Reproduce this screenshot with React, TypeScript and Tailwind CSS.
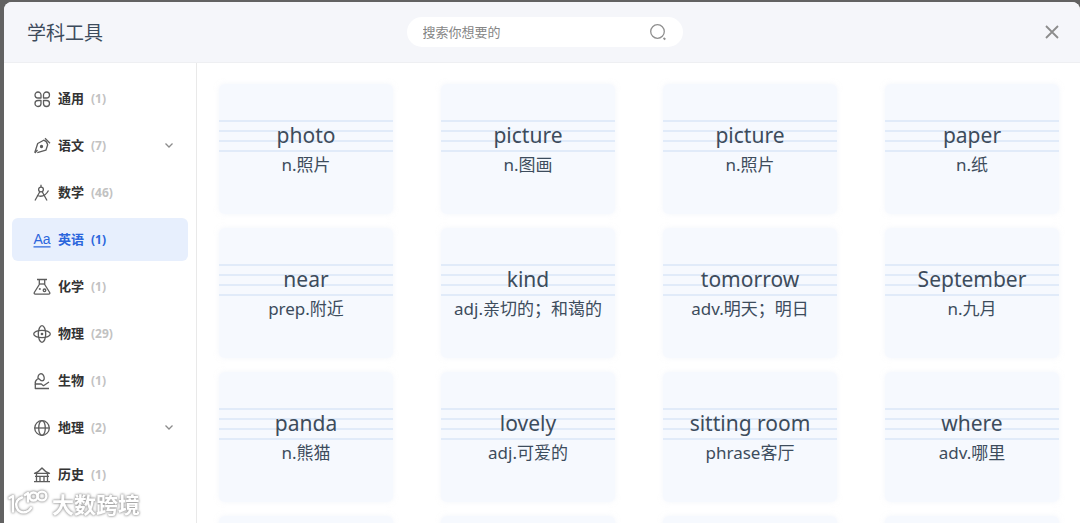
import type { ReactNode } from 'react';

type Subject = {
  name: string;
  count: number;
  icon: ReactNode;
  expandable?: boolean;
};

const subjects: Subject[] = [
  {
    name: '通用',
    count: 1,
    icon: (
      <>
        <path d="M8 5a3 3 0 1 0-3 3h3V5Z" />
        <path d="M10.500 5a3 3 0 1 1 3 3h-3V5Z" />
        <path d="M8 13.500a3 3 0 1 1-3-3h3v3Z" />
        <path d="M10.500 13.500a3 3 0 1 0 3-3h-3v3Z" />
      </>
    ),
  },
  {
    name: '语文',
    count: 7,
    expandable: true,
    icon: (
      <>
        <path d="M1.800 15.500 4.700 6.500l6-3.300c2 .6 3.500 2.400 4 4.600l-1.800 5.400-8.600 2.500" />
        <path d="m1.800 16 2.700-3" />
        <path d="m12 1.300 5 5" />
        <circle cx="8.500" cy="9.500" r="1" fill="currentColor" />
      </>
    ),
  },
  {
    name: '数学',
    count: 46,
    icon: (
      <>
        <path d="M8 .8V3" />
        <circle cx="8" cy="5.500" r="2.400" />
        <path d="M6.800 7.800 2 16.500M9.200 7.800l4.800 8.700" />
        <path d="M4 11.500c4 1.500 8.500.5 11.500-5" />
      </>
    ),
  },
  {
    name: '英语',
    count: 1,
    icon: (
      <>
        <text x="0.500" y="12.500" fontSize="14" fontWeight="400" fill="currentColor" stroke="none" className="font-['Liberation_Sans',sans-serif]">
          Aa
        </text>
        <path d="M.5 15.800h17" />
      </>
    ),
  },
  {
    name: '化学',
    count: 1,
    icon: (
      <>
        <path d="M4 1.500h10M6.300 1.500v5L1.300 14.500c-.4 1 0 1.600 1 1.600h13.400c1 0 1.400-.6 1-1.600l-5-8v-5" />
        <path d="M6.300 6h5.400" />
        <circle cx="11.500" cy="12.300" r="1.300" />
        <circle cx="6.800" cy="11" r=".4" />
      </>
    ),
  },
  {
    name: '物理',
    count: 29,
    icon: (
      <>
        <ellipse cx="9" cy="9" rx="8.300" ry="3.700" />
        <ellipse cx="9" cy="9" rx="3.700" ry="8.300" />
        <circle cx="9" cy="9" r=".7" fill="currentColor" />
      </>
    ),
  },
  {
    name: '生物',
    count: 1,
    icon: (
      <>
        <path d="M5 7.500c-.3-3 1-5.500 3-5.800 2 .2 3.500 2.500 3.200 5.300-.3 1.300-1.500 2-3 1.700L5 6" />
        <path d="M4.500 7C2.300 8.500 2 10.500 2.300 12h6l2.200 1.700L16 10" />
        <path d="M2.300 12v4.500H16" />
      </>
    ),
  },
  {
    name: '地理',
    count: 2,
    expandable: true,
    icon: (
      <>
        <circle cx="9" cy="9" r="7.300" />
        <ellipse cx="9" cy="9" rx="3.300" ry="7.300" />
        <path d="M1.700 9h14.600" />
      </>
    ),
  },
  {
    name: '历史',
    count: 1,
    icon: (
      <>
        <path d="M1.500 7.300C4 6.500 7 4.500 9 2c2 2.500 5 4.500 7.500 5.300h-15Z" />
        <path d="M3.500 7.500v8M14.500 7.500v8M1 15.700h16M2 10.300h14M7 15.500v-5M11 15.500v-5" />
      </>
    ),
  },
];

const words = [
  { en: 'photo', zh: 'n.照片' },
  { en: 'picture', zh: 'n.图画' },
  { en: 'picture', zh: 'n.照片' },
  { en: 'paper', zh: 'n.纸' },
  { en: 'near', zh: 'prep.附近' },
  { en: 'kind', zh: 'adj.亲切的；和蔼的' },
  { en: 'tomorrow', zh: 'adv.明天；明日' },
  { en: 'September', zh: 'n.九月' },
  { en: 'panda', zh: 'n.熊猫' },
  { en: 'lovely', zh: 'adj.可爱的' },
  { en: 'sitting room', zh: 'phrase客厅' },
  { en: 'where', zh: 'adv.哪里' },
];

function Header() {
  return (
    <header className="grid h-[61px] grid-cols-[1fr_278px_1fr] items-center border-b border-[#eeeff2] bg-[#f5f6fa] pr-5 pl-[23px]">
      <h1 className="pt-[3px] text-[19px] text-[#3d4b5c]">学科工具</h1>
      <label className="ml-[2px] flex h-[30px] items-center rounded-full bg-white px-4">
        <input
          type="text"
          aria-label="搜索"
          placeholder="搜索你想要的"
          className="min-w-0 flex-1 pt-[2px] text-[13px] outline-none placeholder:text-[#858585]"
        />
        <svg viewBox="0 0 18 18" className="size-[18px] text-[#8f8f8f]" fill="none" stroke="currentColor" strokeWidth="1.300">
          <circle cx="8.500" cy="8.500" r="6.800" />
          <path d="m14.500 15 1.800 1.500" strokeWidth="1.800" />
        </svg>
      </label>
      <button type="button" aria-label="关闭" className="justify-self-end text-[#8c8c8c]">
        <svg viewBox="0 0 16 16" className="size-4" fill="none" stroke="currentColor" strokeWidth="1.800">
          <path d="m2 2 12 12M14 2 2 14" />
        </svg>
      </button>
    </header>
  );
}

function SubjectItem({ subject, active }: { subject: Subject; active: boolean }) {
  return (
    <button
      type="button"
      className={`flex h-[43px] w-full items-center rounded-md pr-[14px] pl-[21px] text-[13px] font-bold ${
        active ? 'bg-[#e7effd] text-[#2b66dc]' : 'text-[#333]'
      }`}
    >
      <svg
        viewBox="0 0 18 18"
        className={`size-[18px] shrink-0 ${active ? '' : 'text-[#5c5c5c]'}`}
        fill="none"
        stroke="currentColor"
        strokeWidth="1.300"
        strokeLinejoin="round"
      >
        {subject.icon}
      </svg>
      <span className="ml-[7px]">{subject.name}</span>
      <span className={`ml-[7px] text-xs ${active ? '' : 'text-[#c2c2c2]'}`}>({subject.count})</span>
      {subject.expandable && (
        <svg viewBox="0 0 10 10" className="ml-auto size-[10px] text-[#8c8c8c]" fill="none" stroke="currentColor" strokeWidth="1.300">
          <path d="m1.500 2.500 3.500 3.500L8.500 2.500" />
        </svg>
      )}
    </button>
  );
}

function WordCard({ en, zh }: { en: string; zh: string }) {
  return (
    <article className="h-[130px] rounded-md bg-[#f6f9fe] pt-9 text-center text-[#3d4c5c] shadow-[0_0_5px_rgba(232,238,248,0.5)]">
      <div className="relative h-8">
        <div className="flex h-full flex-col justify-between">
          <i className="h-[2px] bg-[#e1ebf9]" />
          <i className="h-[2px] bg-[#e1ebf9]" />
          <i className="h-[2px] bg-[#e1ebf9]" />
          <i className="h-[2px] bg-[#e1ebf9]" />
        </div>
        <h2 className="absolute inset-0 text-[21px] leading-[30px]">{en}</h2>
      </div>
      <p className="text-[17px] leading-[26px]">{zh}</p>
    </article>
  );
}

function Watermark() {
  return (
    <div className="pointer-events-none absolute bottom-1 left-2 flex items-center gap-1 text-white [filter:drop-shadow(0_0_1px_#999)_drop-shadow(0_0_1px_#bbb)]">
      <svg viewBox="0 0 40 30" className="h-[30px] w-10" fill="none" stroke="currentColor" strokeWidth="2.400" strokeLinecap="round" strokeLinejoin="round">
        <path d="M1.500 9 5 7v15.500" />
        <path d="M14 8.500C9 10 7.500 14 8.500 18c1.500 4.500 5.500 6 9.500 5 2.500-.8 4-2 5-4" />
        <path d="m17 6 3-2v8.500" />
        <circle cx="25.500" cy="7.500" r="4" />
        <circle cx="34" cy="7" r="4.400" />
      </svg>
      <span className="text-[22px] leading-7 font-bold">大数跨境</span>
    </div>
  );
}

export default function App() {
  return (
    <div className="relative h-screen overflow-hidden bg-[#626262] pt-[2px] pl-1 font-['Noto_Sans','Noto_Sans_CJK_SC',sans-serif]">
      <div className="flex h-full flex-col overflow-hidden rounded-t-lg bg-white">
        <Header />
        <div className="flex min-h-0 flex-1">
          <nav className="w-[193px] shrink-0 border-r border-[#e9e9e9] px-2 pt-[14px]">
            <ul className="flex flex-col gap-1">
              {subjects.map(subject => (
                <li key={subject.name}>
                  <SubjectItem subject={subject} active={subject.name === '英语'} />
                </li>
              ))}
            </ul>
          </nav>
          <main className="grid flex-1 auto-rows-max grid-cols-4 gap-x-12 gap-y-[14px] overflow-hidden pt-[21px] pr-[21px] pl-[22px]">
            {words.map((word, index) => (
              <WordCard key={index} en={word.en} zh={word.zh} />
            ))}
            {[0, 1, 2, 3].map(slot => (
              <div key={slot} className="h-[130px] rounded-md bg-[#f6f9fe] shadow-[0_0_5px_rgba(232,238,248,0.5)]" />
            ))}
          </main>
        </div>
      </div>
      <Watermark />
    </div>
  );
}
